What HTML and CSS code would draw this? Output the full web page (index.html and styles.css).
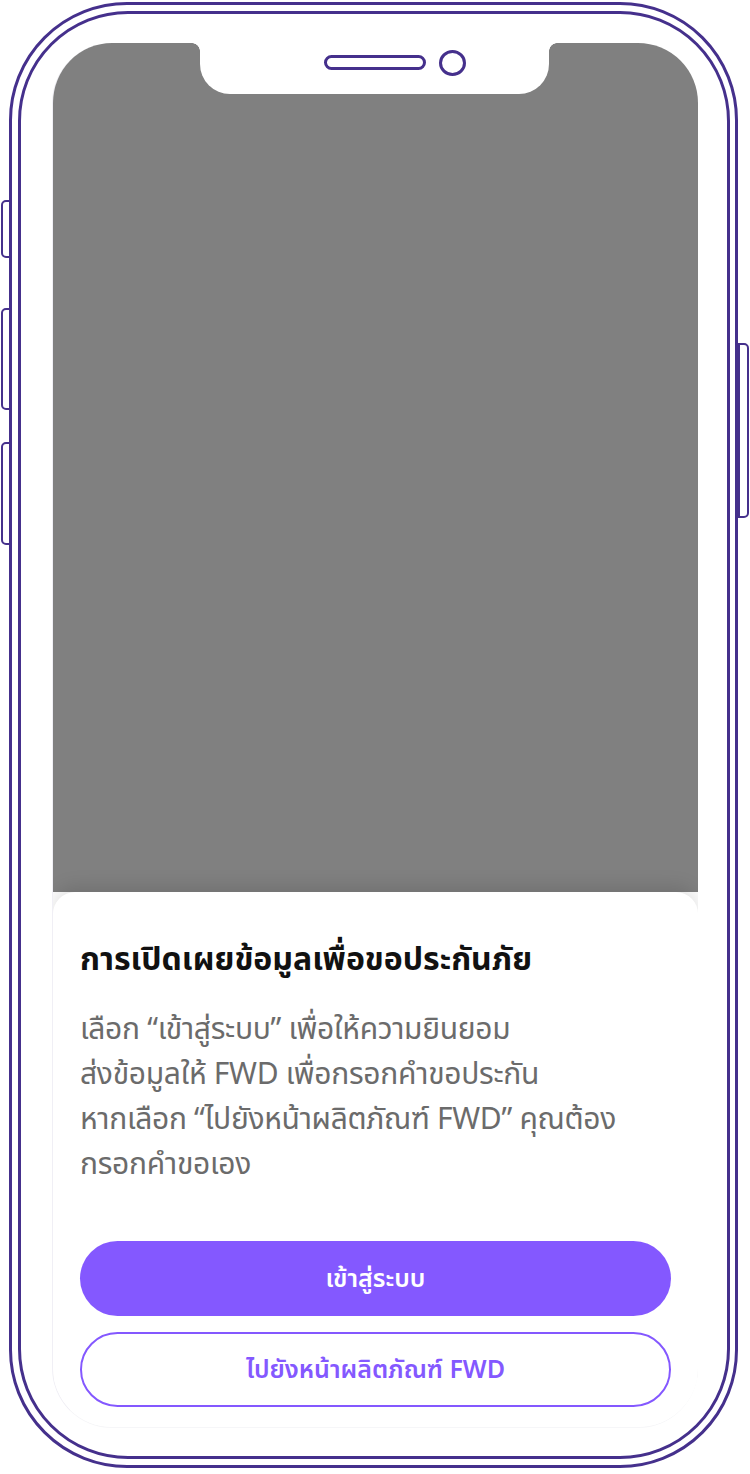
FILE: index.html
```html
<!DOCTYPE html>
<html lang="th">
<head>
<meta charset="utf-8">
<title>FWD</title>
<link rel="stylesheet" href="styles.css">
</head>
<body>
<div class="phone">
  <div class="side-btn side-l b1"></div>
  <div class="side-btn side-l b2"></div>
  <div class="side-btn side-l b3"></div>
  <div class="side-btn side-r b4"></div>
  <div class="frame-outer">
    <div class="frame-inner">
      <div class="screen">
        <div class="notch">
          <span class="speaker"></span>
          <span class="camera"></span>
        </div>
        <div class="backdrop"></div>
        <div class="sheet">
          <h1 class="title">การเปิดเผยข้อมูลเพื่อขอประกันภัย</h1>
          <p class="desc">เลือก “เข้าสู่ระบบ” เพื่อให้ความยินยอม<br>ส่งข้อมูลให้ FWD เพื่อกรอกคำขอประกัน<br>หากเลือก “ไปยังหน้าผลิตภัณฑ์ FWD” คุณต้อง<br>กรอกคำขอเอง</p>
          <div class="actions">
            <button class="btn btn-primary">เข้าสู่ระบบ</button>
            <button class="btn btn-outline">ไปยังหน้าผลิตภัณฑ์ FWD</button>
          </div>
        </div>
      </div>
    </div>
  </div>
</div>
</body>
</html>
```
FILE: styles.css
```css
* { box-sizing: border-box; }
html, body { margin: 0; padding: 0; background: #ffffff; }
body {
  font-family: "Noto Sans Thai", "Noto Sans Thai UI", "Noto Sans Thai Looped", "Loma", "Garuda", "Noto Sans", sans-serif;
}
.phone {
  position: relative;
  width: 750px;
  height: 1474px;
  padding: 2px 12px 6px 9px;
}
.frame-outer {
  position: relative;
  z-index: 1;
  height: 1466px;
  width: 729px;
  border: 3px solid #45308c;
  border-radius: 118px;
  padding: 6px 5px 6px 6px;
  background: #ffffff;
}
.frame-inner {
  height: 100%;
  border: 3px solid #45308c;
  border-radius: 110px;
  padding: 29px 29px 28px 31px;
  display: flex;
}
.screen {
  position: relative;
  flex: 1;
  display: flex;
  flex-direction: column;
  border-radius: 60px;
  overflow: hidden;
  border-left: 1px solid #f0eff5;
  border-bottom: 1px solid #f6f6f8;
}
.backdrop {
  flex: 1;
  background: #808080;
}
.notch {
  position: absolute;
  left: 147px;
  top: 0;
  width: 349px;
  height: 51px;
  background: #ffffff;
  border-radius: 0 0 30px 30px;
  display: flex;
  align-items: flex-start;
  gap: 13px;
  padding-left: 124px;
  padding-top: 7px;
}
.notch::before, .notch::after {
  content: "";
  position: absolute;
  top: 0;
  width: 8px;
  height: 8px;
}
.notch::before {
  left: -8px;
  background: radial-gradient(circle at 0 100%, transparent 7.5px, #ffffff 8px);
}
.notch::after {
  right: -8px;
  background: radial-gradient(circle at 100% 100%, transparent 7.5px, #ffffff 8px);
}
.speaker {
  width: 102px;
  height: 15px;
  margin-top: 5px;
  border: 3px solid #45308c;
  border-radius: 8px;
}
.camera {
  width: 27px;
  height: 26px;
  border: 3px solid #45308c;
  border-radius: 50%;
}
.sheet {
  background: #ffffff;
  border-radius: 22px 22px 0 0;
  box-shadow: 0 -6px 18px rgba(0, 0, 0, 0.12);
  padding: 46px 27px 20px 27px;
  height: 535px;
  display: flex;
  flex-direction: column;
}
.title {
  margin: 0;
  font-size: 32px;
  font-weight: 700;
  line-height: 44px;
  color: #111111;
}
.desc {
  margin: 26px 0 0 0;
  font-size: 30px;
  line-height: 45px;
  color: #6b6b6b;
  font-weight: 400;
  letter-spacing: -0.3px;
}
.actions {
  margin-top: auto;
  display: flex;
  flex-direction: column;
  gap: 16px;
}
.btn {
  height: 75px;
  border-radius: 38px;
  font-family: inherit;
  font-size: 25px;
  font-weight: 600;
  width: 100%;
  cursor: pointer;
}
.btn-primary {
  background: #8458ff;
  color: #ffffff;
  border: none;
}
.btn-outline {
  background: #ffffff;
  color: #8458ff;
  border: 2px solid #8458ff;
}
.side-btn {
  position: absolute;
  width: 11px;
  border: 2px solid #45308c;
  background: #ffffff;
  z-index: 0;
}
.side-l { left: 1px; border-radius: 5px 0 0 5px; }
.side-r { right: 1px; border-radius: 0 5px 5px 0; }
.b1 { top: 200px; height: 58px; }
.b2 { top: 308px; height: 102px; }
.b3 { top: 442px; height: 103px; }
.b4 { top: 343px; height: 175px; }
```
